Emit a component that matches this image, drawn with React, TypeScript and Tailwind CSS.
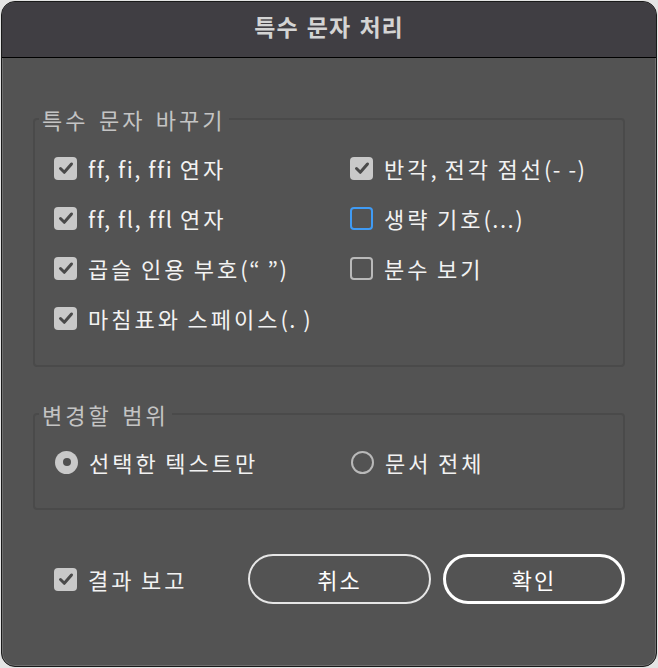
import { useState } from "react";

const font = { fontFamily: '"Noto Sans CJK KR", "Noto Sans", sans-serif' };

// hangul in the original dialog font runs a bit wider than Noto's, latin doesn't
function Spaced({ text }: { text: string }) {
  return (
    <>
      {text.split(/([가-힣]+)/).map((part, i) =>
        i % 2 === 1 ? (
          <span key={i} className="tracking-[3px]">
            {part}
          </span>
        ) : (
          part
        )
      )}
    </>
  );
}

function CheckMark() {
  return (
    <svg viewBox="0 0 22 22" className="h-[22px] w-[22px]">
      <path
        d="M5.5 11.5 L9.3 15.3 L16.5 7"
        fill="none"
        stroke="#4a4a4a"
        strokeWidth="3"
        strokeLinecap="round"
        strokeLinejoin="round"
      />
    </svg>
  );
}

type BoxState = "on" | "off" | "focus";

function Check({ label, state }: { label: string; state: BoxState }) {
  return (
    <label className="flex h-[50px] items-center gap-[11px]">
      {state === "on" && (
        <span className="flex h-[23px] w-[23px] shrink-0 items-center justify-center rounded-[4px] bg-[#c9c9c9]">
          <CheckMark />
        </span>
      )}
      {state === "off" && (
        <span className="h-[23px] w-[23px] shrink-0 rounded-[4px] border-2 border-[#b9b9b9]" />
      )}
      {state === "focus" && (
        <span className="h-[23px] w-[23px] shrink-0 rounded-[4px] border-[2.5px] border-[#3f9bf5]" />
      )}
      <span className="whitespace-nowrap text-[22px] leading-none tracking-[1.5px] text-[#f2f2f2]">
        <Spaced text={label} />
      </span>
    </label>
  );
}

function Radio({ label, on, onPick }: { label: string; on: boolean; onPick: () => void }) {
  return (
    <label className="flex h-[50px] items-center gap-[11px]" onClick={onPick}>
      {on ? (
        <span className="flex h-[23px] w-[23px] items-center justify-center rounded-full bg-[#c9c9c9]">
          <span className="h-[8px] w-[8px] rounded-full bg-[#4f4f4f]" />
        </span>
      ) : (
        <span className="h-[23px] w-[23px] rounded-full border-2 border-[#b9b9b9]" />
      )}
      <span className="whitespace-nowrap text-[22px] leading-none tracking-[1.5px] text-[#f2f2f2]">
        <Spaced text={label} />
      </span>
    </label>
  );
}

export default function App() {
  const [scope, setScope] = useState("selection");

  return (
    <div className="h-[668px] w-[658px] bg-[#e4e4e4] p-px" style={font}>
      <div className="flex h-[666px] w-[656px] flex-col overflow-hidden rounded-[14px] border border-[#1a1a1a] bg-[#535353] shadow-[inset_0_0_0_1px_#6e6e6e]">
        <div className="flex h-[56px] shrink-0 items-center justify-center border-b border-black bg-[#403e43] pb-[6px]">
          <h1 className="text-[23px] font-bold tracking-[1px] text-[#d4d4d4] [word-spacing:2px]">
            특수 문자 처리
          </h1>
        </div>

        <div className="flex flex-1 flex-col px-[31px] pt-[49px]">
          <fieldset className="rounded-[4px] border-2 border-[#4a4a4a] pb-[22px] pt-[12px]">
            <legend className="ml-[4px] px-[3px] text-[22px] leading-[24px] tracking-[1.5px] text-[#c4c4c4] [word-spacing:4px]">
              <Spaced text="특수 문자 바꾸기" />
            </legend>
            <div className="grid grid-cols-[296px_1fr] pl-[19px]">
              <Check label="ff, fi, ffi 연자" state="on" />
              <Check label="반각, 전각 점선(- -)" state="on" />
              <Check label="ff, fl, ffl 연자" state="on" />
              <Check label="생략 기호(...)" state="focus" />
              <Check label="곱슬 인용 부호(“ ”)" state="on" />
              <Check label="분수 보기" state="off" />
              <Check label="마침표와 스페이스(. )" state="on" />
            </div>
          </fieldset>

          <fieldset className="mt-[35px] rounded-[4px] border-2 border-[#4a4a4a] pb-[21px] pt-[11px]">
            <legend className="ml-[4px] px-[3px] text-[22px] leading-[24px] tracking-[1.5px] text-[#c4c4c4] [word-spacing:4px]">
              <Spaced text="변경할 범위" />
            </legend>
            <div className="grid grid-cols-[296px_1fr] pl-[20px]">
              <Radio label="선택한 텍스트만" on={scope === "selection"} onPick={() => setScope("selection")} />
              <Radio label="문서 전체" on={scope === "document"} onPick={() => setScope("document")} />
            </div>
          </fieldset>

          <div className="mt-[44px] flex items-center">
            <div className="w-[215px] pl-[21px]">
              <Check label="결과 보고" state="on" />
            </div>
            <button className="h-[50px] w-[183px] rounded-full border-2 border-[#e6e6e6] text-[22px] tracking-[2px] text-white">
              취소
            </button>
            <button className="ml-[12px] h-[50px] w-[182px] rounded-full border-[3px] border-white text-[22px] tracking-[2px] text-white">
              확인
            </button>
          </div>
        </div>
      </div>
    </div>
  );
}
